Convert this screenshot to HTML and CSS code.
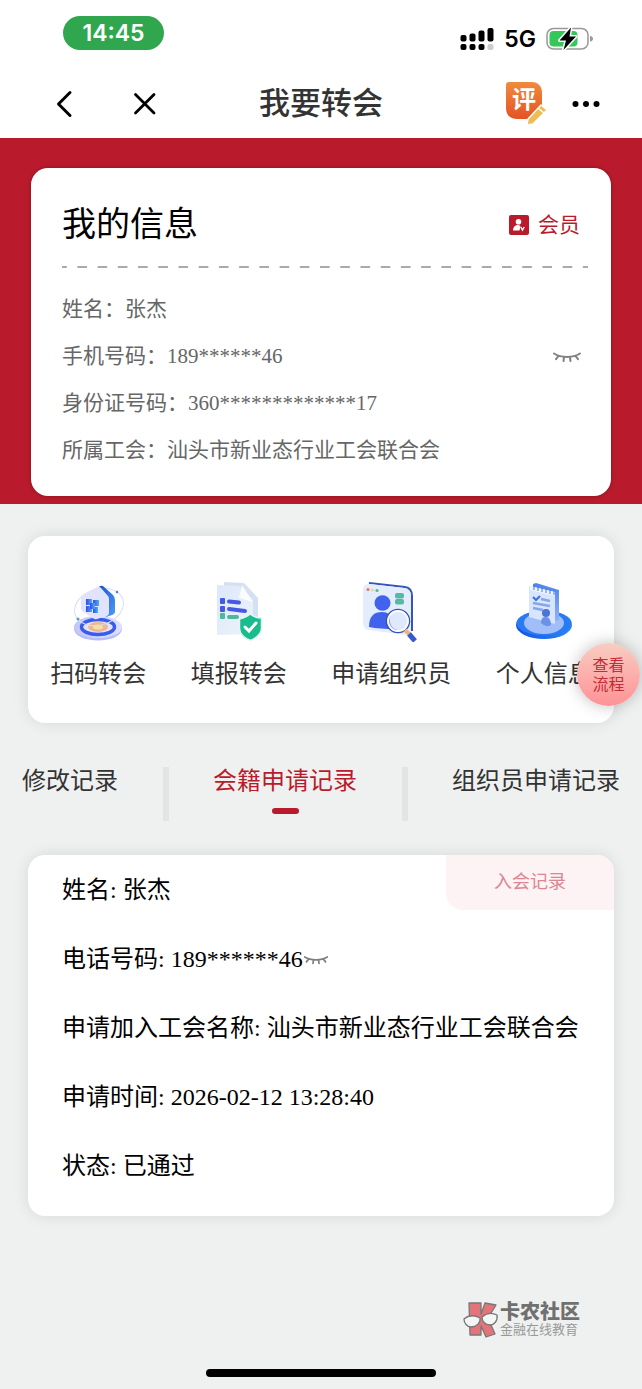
FILE: index.html
```
<!DOCTYPE html>
<html lang="zh-CN">
<head>
  <meta charset="UTF-8" />
  <meta name="viewport" content="width=device-width, initial-scale=1.0"/>
  <title>我要转会</title>
  <link rel="stylesheet" href="styles.css">
</head>
<body>

  <svg class="defs" width="0" height="0" aria-hidden="true">
    <defs>
      <symbol id="eye" viewBox="0 0 30 12">
        <path d="M2 2.500C9 7 21 7 28 2.500M6.500 5L4 8.200M12 6.300L11.500 10M18 6.300L18.500 10M23.500 5L26 8.200" fill="none" stroke="#808080" stroke-width="2" stroke-linecap="round"/>
      </symbol>
    </defs>
  </svg>

  <div class="status-bar">
    <div class="clock">14:45</div>
    <div class="signals">
      <svg width="34" height="24" viewBox="0 0 34 24">
        <rect x="0.500" y="8" width="6" height="6.500" rx="2"/>
        <rect x="9.500" y="6.500" width="6" height="8" rx="2"/>
        <rect x="18.500" y="3.500" width="6" height="11" rx="2"/>
        <rect x="27.500" y="1" width="6" height="13.500" rx="2"/>
        <rect x="0.500" y="17" width="6" height="6" rx="2"/>
        <rect x="9.500" y="17" width="6" height="6" rx="2"/>
        <rect x="18.500" y="17" width="6" height="6" rx="2"/>
        <rect x="27.500" y="17" width="6" height="6" rx="2" fill="#ccc"/>
      </svg>
      <span class="network">5G</span>
      <svg width="48" height="24" viewBox="0 0 48 24">
        <rect x="1" y="1.500" width="41" height="20.500" rx="6.500" fill="#fff" stroke="#999" stroke-width="1.500"/>
        <rect x="3.500" y="4" width="28" height="15.500" rx="4" fill="#34c759"/>
        <path d="M44 9C48 9.500 48 14 44 14.500Z" fill="#999"/>
        <path d="M25 0.500L13.500 13.500H20L17.500 23L30 9.500H23.500Z" stroke="#fff" stroke-width="3" stroke-linejoin="round"/>
        <path d="M25 0.500L13.500 13.500H20L17.500 23L30 9.500H23.500Z"/>
      </svg>
    </div>
  </div>

  <header class="nav">
    <div class="nav-left">
      <button type="button" class="icon-btn" aria-label="返回">
        <svg width="18" height="28" viewBox="0 0 18 28"><path d="M14 2.500L2.500 14L14 25.500" fill="none" stroke="#000" stroke-width="3" stroke-linecap="round" stroke-linejoin="round"/></svg>
      </button>
      <button type="button" class="icon-btn" aria-label="关闭">
        <svg width="24" height="24" viewBox="0 0 24 24"><path d="M2.500 2.500L21 21M21 2.500L2.500 21" fill="none" stroke="#000" stroke-width="2.800" stroke-linecap="round"/></svg>
      </button>
    </div>
    <h1>我要转会</h1>
    <div class="nav-right">
      <button type="button" class="icon-btn rate" aria-label="评价">
        <svg width="42" height="44" viewBox="0 0 42 44">
          <defs><linearGradient id="orange" x2="0" y2="1"><stop stop-color="#ef8b3d"/><stop offset="1" stop-color="#e45324"/></linearGradient></defs>
          <path d="M3 0H26C32 0 36 4 36 11V25C36 33 32 37 25 37H12C4 37 0 33 0 26V3C0 1 1 0 3 0Z" fill="url(#orange)"/>
          <path d="M35 23L41 28L27 42L21 43L22 37Z" fill="#edbd54" stroke="#fff" stroke-width="1.500" stroke-linejoin="round"/>
          <path d="M32 26L38 31" stroke="#fff" stroke-width="1.500"/>
        </svg>
        <span>评</span>
      </button>
      <button type="button" class="icon-btn" aria-label="更多">
        <svg width="28" height="8" viewBox="0 0 28 8"><circle cx="3.500" cy="4" r="3"/><circle cx="14" cy="4" r="3"/><circle cx="24.500" cy="4" r="3"/></svg>
      </button>
    </div>
  </header>

  <main>
    <section class="banner">
      <div class="info-card">
        <div class="info-head">
          <h2>我的信息</h2>
          <div class="member">
            <svg width="20" height="20" viewBox="0 0 20 20">
              <rect width="20" height="20" rx="2" fill="#ba1b2c"/>
              <circle cx="9.500" cy="6.800" r="2.800" fill="#fff"/>
              <path d="M4 15.500C4 12 6 10 9.500 10L11.500 11L10.500 15.500Z" fill="#fff"/>
              <path d="M11.800 12L13.500 15L15.200 12" fill="none" stroke="#fff" stroke-width="1.400"/>
            </svg>
            <span>会员</span>
          </div>
        </div>
        <div class="dash"></div>
        <div class="info-row">姓名：张杰</div>
        <div class="info-row">手机号码：189******46
          <button type="button" class="icon-btn" aria-label="显示号码"><svg width="30" height="12"><use href="#eye"/></svg></button>
        </div>
        <div class="info-row">身份证号码：360*************17</div>
        <div class="info-row">所属工会：汕头市新业态行业工会联合会</div>
      </div>
    </section>

    <nav class="card tools">
      <a href="#scan">
        <svg width="64" height="64" viewBox="0 0 64 64">
          <defs>
            <linearGradient id="disc" x2="1"><stop stop-color="#c3c5f7"/><stop offset="1" stop-color="#dce2fd"/></linearGradient>
            <linearGradient id="side" x2="1" y2="1"><stop stop-color="#1c50c8"/><stop offset="1" stop-color="#4c9cf8"/></linearGradient>
            <linearGradient id="qr" x2="1"><stop stop-color="#3c45e8"/><stop offset="1" stop-color="#43b4f5"/></linearGradient>
          </defs>
          <ellipse cx="32" cy="51" rx="24" ry="11.500" fill="#b6bff7"/>
          <ellipse cx="32" cy="49" rx="24" ry="11" fill="url(#disc)"/>
          <ellipse cx="32" cy="49" rx="16.500" ry="7.500" fill="#e3e4fc" stroke="#3a5bec" stroke-width="3.500"/>
          <ellipse cx="32" cy="49" rx="10" ry="5" fill="#eab98f"/>
          <ellipse cx="32" cy="49" rx="5" ry="2.500" fill="#f9dda9"/>
          <ellipse cx="33" cy="29" rx="25" ry="18" fill="none" stroke="#dbdcfa" transform="rotate(-18 33 29)"/>
          <path d="M32 10Q34 7 37 8L47 17Q49 19 49 22V34Q49 36 46 37L40 39Z" fill="url(#side)"/>
          <path d="M17 17L31 9Q33 8 35 10L42 18Q43 19 43 21V35Q43 37 41 38L31 41Q29 42 27 40L16 33Q15 32 15 30V20Q15 18 17 17Z" fill="#e1e3fc"/>
          <g fill="url(#qr)"><rect x="20" y="21" width="6" height="6"/><rect x="27" y="22" width="6" height="6"/><rect x="20" y="28" width="6" height="6"/><rect x="27" y="29" width="5" height="6"/><rect x="24" y="25" width="5" height="6"/></g>
          <circle cx="51" cy="14" r="1.200" fill="#4479c5"/><circle cx="12" cy="41" r="1.500" fill="#4aa0bd"/>
        </svg>
        <span>扫码转会</span>
      </a>
      <a href="#report">
        <svg width="64" height="64" viewBox="0 0 64 64">
          <defs><linearGradient id="paper" x2="1" y2="1"><stop stop-color="#dce9f9"/><stop offset="1" stop-color="#edf2fb"/></linearGradient></defs>
          <path d="M17 4L37 5L51 20V44H17Z" fill="#d5e1f2"/>
          <path d="M10 7L32 8L46 22V56L10 57Z" fill="url(#paper)"/>
          <path d="M35 7L46 24L32 20Z" fill="#fafcff"/>
          <g fill="#4459e5"><rect x="13" y="20" width="5" height="6" rx="1"/><rect x="13" y="28" width="5" height="6" rx="1"/></g>
          <rect x="13" y="35" width="5" height="6" rx="1" fill="#4bba9a"/>
          <path d="M22 23.500L32 24.500M22 31L38 33" stroke="#4459e5" stroke-width="4" stroke-linecap="round"/>
          <path d="M22 39H30" stroke="#4bba9a" stroke-width="4" stroke-linecap="round"/>
          <path d="M43 36C47 39 50 40 54.500 40V50C54.500 56 49 60 43.500 62.500C37 60 32.500 56 32.500 50V41C36 40 40 39 43 36Z" fill="#19bd8d" stroke="#e1f6f4" stroke-width="1.500"/>
          <path d="M38 49L42 53L49 45" fill="none" stroke="#fff" stroke-width="3" stroke-linecap="round"/>
        </svg>
        <span>填报转会</span>
      </a>
      <a href="#organizer">
        <svg width="64" height="64" viewBox="0 0 64 64">
          <path d="M10 5L46 9Q53 10 53 18V53" fill="none" stroke="#3454be" stroke-width="2"/>
          <path d="M11 6L45 10Q52 11 52 18V52Q52 58 47 57L10 52Q4 51 4 45V12Q4 5 11 6Z" fill="#e4edfc"/>
          <circle cx="9" cy="11.500" r="1.600" fill="#e77772"/><circle cx="13.500" cy="12" r="1.500" fill="#f5d391"/><circle cx="18" cy="12.500" r="1.600" fill="#49ba95"/>
          <rect x="36" y="15" width="9" height="5.500" rx="2" fill="#57b8a3"/><rect x="36" y="21" width="9" height="5.500" rx="2" fill="#57b8a3"/>
          <ellipse cx="23.500" cy="25" rx="8" ry="7.800" fill="#4062ed"/>
          <path d="M10 49C10 38 15 34 23 34C31 34 35 40 36 51Q21 51 10 49Z" fill="#4062ed"/>
          <circle cx="39" cy="43" r="11" fill="#dfe9fe"/>
          <path d="M32 35C29 44 32 51 39 52C33 53 29 48 29 42Z" fill="#8a9cf0"/>
          <circle cx="39" cy="43" r="11.500" fill="none" stroke="#3652b8" stroke-width="1.500"/>
          <circle cx="39" cy="43" r="10" fill="none" stroke="#f9fbff" stroke-width="1.800"/>
          <path d="M46 52L51 57" stroke="#efb57d" stroke-width="4"/>
          <path d="M50 56L56 63" stroke="#3658cd" stroke-width="5"/>
        </svg>
        <span>申请组织员</span>
      </a>
      <a href="#profile">
        <svg width="64" height="64" viewBox="0 0 64 64">
          <defs>
            <linearGradient id="plate" x2="1"><stop stop-color="#1551e5"/><stop offset="1" stop-color="#2c86f7"/></linearGradient>
            <linearGradient id="book" x2="0" y2="1"><stop stop-color="#4e83ec"/><stop offset="1" stop-color="#91b2fa"/></linearGradient>
          </defs>
          <ellipse cx="32" cy="47" rx="28" ry="14" fill="url(#plate)"/>
          <ellipse cx="32" cy="45" rx="27.500" ry="12.500" fill="#287bf3"/>
          <ellipse cx="32" cy="45" rx="20" ry="11" fill="#a1bef9"/>
          <path d="M21 6L24 5L47 12V43L21 37Z" fill="url(#book)"/>
          <path d="M17 8L43 14V46L17 39Z" fill="#d8e5fe"/>
          <path d="M18 8L43 14V18L18 12Z" fill="#eef4ff"/>
          <path d="M22 7V12M26 8V13M30 9V14M34 10V15M38 11V16M42 12V17" stroke="#477bd7"/>
          <path d="M21 19L24 22L28 18" fill="none" stroke="#3e72e2" stroke-width="2"/>
          <path d="M29 21L38 23M21 25L38 28M21 30L31 32" stroke="#86a5ec" stroke-width="2.500"/>
          <circle cx="34" cy="35" r="4" fill="#4b73d8"/>
          <path d="M29 45C29 40 31 39 34 39C37 39 39 42 39 47Q34 50 29 45Z" fill="#6c91eb"/>
        </svg>
        <span>个人信息</span>
      </a>
    </nav>

    <div class="tabs">
      <button type="button">修改记录</button>
      <i></i>
      <button type="button" class="active">会籍申请记录</button>
      <i></i>
      <button type="button">组织员申请记录</button>
    </div>

    <section class="card record">
      <div class="tag">入会记录</div>
      <p>姓名: 张杰</p>
      <p>电话号码: 189******46<button type="button" class="icon-btn" aria-label="显示号码"><svg width="26" height="12"><use href="#eye"/></svg></button></p>
      <p>申请加入工会名称: 汕头市新业态行业工会联合会</p>
      <p>申请时间: 2026-02-12 13:28:40</p>
      <p>状态: 已通过</p>
    </section>
  </main>

  <button type="button" class="float-btn">查看<br>流程</button>

  <footer>
    <div class="brand">
      <svg width="36" height="38" viewBox="0 0 36 38">
        <path d="M6 2H18V13L22 2L33 4L25 17L32 33L23 36L18 25V34H7Z" fill="#e4747c" stroke="#777" stroke-width="1.300" stroke-linejoin="round"/>
        <path d="M1 18Q8 12 17 17C18 22 13 26 8 26C4 26 1 22 1 18ZM19 16Q26 10 34 14C35 20 31 24 27 24C22 24 19 20 19 16Z" fill="#f4f5f5" stroke="#777" stroke-width="1.300"/>
      </svg>
      <div>
        <strong>卡农社区</strong>
        <small>金融在线教育</small>
      </div>
    </div>
    <div class="home-bar"></div>
  </footer>

</body>
</html>
```
FILE: styles.css
```
* { box-sizing: border-box; }
body {
  margin: 0;
  min-height: 100vh;
  display: flex;
  flex-direction: column;
  position: relative;
  background: #eff1f0;
  color: #000;
  font-family: "Liberation Serif", "Noto Sans CJK SC", serif;
  font-size: 24px;
}
h1, h2, p { margin: 0; font-weight: 400; }
svg { display: block; flex: none; }
button {
  padding: 0;
  border: none;
  background: none;
  font-family: inherit;
  color: inherit;
  cursor: pointer;
}
a { color: inherit; text-decoration: none; }
.defs { position: absolute; }

.status-bar {
  display: flex;
  justify-content: space-between;
  align-items: flex-start;
  height: 70px;
  padding: 16px 48px 0 63px;
  background: #fff;
  font-family: Inter, sans-serif;
  font-weight: 600;
}
.clock {
  width: 101px;
  border-radius: 17px;
  background: #30a74e;
  color: #fff;
  font-size: 23px;
  line-height: 34px;
  text-align: center;
}
.signals {
  display: flex;
  align-items: center;
  gap: 10px;
  padding-top: 10px;
}
.network {
  font-size: 23px;
  line-height: 26px;
}

.nav {
  display: grid;
  grid-template-columns: 1fr auto 1fr;
  align-items: center;
  height: 68px;
  padding: 0 42px;
  background: #fff;
}
.nav h1 {
  color: #333;
  font-size: 31px;
  line-height: 44px;
  font-weight: 500;
}
.nav-left {
  display: flex;
  align-items: center;
  gap: 59px;
  padding-left: 14px;
}
.nav-right {
  display: flex;
  align-items: center;
  justify-content: flex-end;
  gap: 24px;
}
.rate { position: relative; }
.rate span {
  position: absolute;
  left: 6px;
  top: 0;
  color: #fff;
  font-size: 24px;
  line-height: 36px;
  font-weight: 700;
}

.banner {
  padding: 30px 31px 8px;
  background: #ba1b2c;
}
.info-card {
  padding: 32px 23px 22px 31px;
  border-radius: 17px;
  background: #fff;
  box-shadow: 0 0 4px rgba(0, 0, 0, 0.3);
}
.info-head {
  display: flex;
  align-items: center;
  justify-content: space-between;
  padding-right: 8px;
}
.info-head h2 {
  font-size: 34px;
  line-height: 50px;
}
.member {
  display: flex;
  align-items: center;
  gap: 9px;
  color: #ba1b2c;
  font-size: 21px;
  line-height: 30px;
}
.dash {
  height: 2px;
  margin: 16px 0 18px;
  background: linear-gradient(90deg, #aaa 25%, transparent 25% 75%, #aaa 75%) 0 0 / 20px 2px round;
}
.info-row {
  display: flex;
  align-items: center;
  justify-content: space-between;
  padding-right: 6px;
  color: #666;
  font-size: 21px;
  line-height: 47px;
}

.card {
  margin: 0 28px;
  border-radius: 17px;
  background: #fff;
  box-shadow: 0 0 16px rgba(0, 0, 0, 0.1);
}
.tools {
  display: flex;
  justify-content: space-around;
  margin-top: 32px;
  padding: 42px 0 31px;
  color: #333;
}
.tools a {
  display: flex;
  flex-direction: column;
  align-items: center;
  gap: 14px;
  line-height: 36px;
  white-space: nowrap;
}

.tabs {
  display: flex;
  justify-content: space-between;
  margin: 44px 0 34px;
  padding: 0 22px;
}
.tabs button {
  display: flex;
  flex-direction: column;
  align-items: center;
  gap: 13px;
  height: 54px;
  color: #333;
  font-size: 24px;
  line-height: 28px;
  white-space: nowrap;
}
.tabs i {
  width: 6px;
  height: 54px;
  background: #e4e4e4;
}
.tabs .active { color: #ba1b2c; }
.tabs .active::after {
  content: "";
  width: 27px;
  height: 6px;
  border-radius: 3px;
  background: #ba1b2c;
}

.record {
  position: relative;
  padding: 1px 34px 15px;
}
.record p {
  display: flex;
  align-items: center;
  line-height: 69px;
}
.tag {
  position: absolute;
  top: 0;
  right: 0;
  width: 168px;
  border-radius: 0 17px 0 17px;
  background: #fdf2f4;
  color: #db8791;
  font-size: 18px;
  line-height: 55px;
  text-align: center;
}

.float-btn {
  position: absolute;
  top: 643px;
  right: 2px;
  width: 63px;
  height: 63px;
  border-radius: 50%;
  background: linear-gradient(#f8cdc2, #ff9296);
  box-shadow: 0 0 16px rgba(0, 0, 0, 0.25);
  color: #c42c3a;
  font-size: 16px;
  line-height: 19px;
}

footer {
  display: flex;
  flex-direction: column;
  align-items: center;
  gap: 30px;
  margin-top: auto;
  padding: 40px 62px 12px;
}
.brand {
  display: flex;
  align-items: center;
  align-self: flex-end;
  gap: 1px;
  color: #707070;
}
.brand strong, .brand small { display: block; }
.brand strong {
  font-size: 20px;
  line-height: 20px;
  font-weight: 900;
}
.brand small {
  color: #999;
  font-size: 13px;
  line-height: 16px;
}
.home-bar {
  width: 230px;
  height: 8px;
  border-radius: 4px;
  background: #000;
}
```
